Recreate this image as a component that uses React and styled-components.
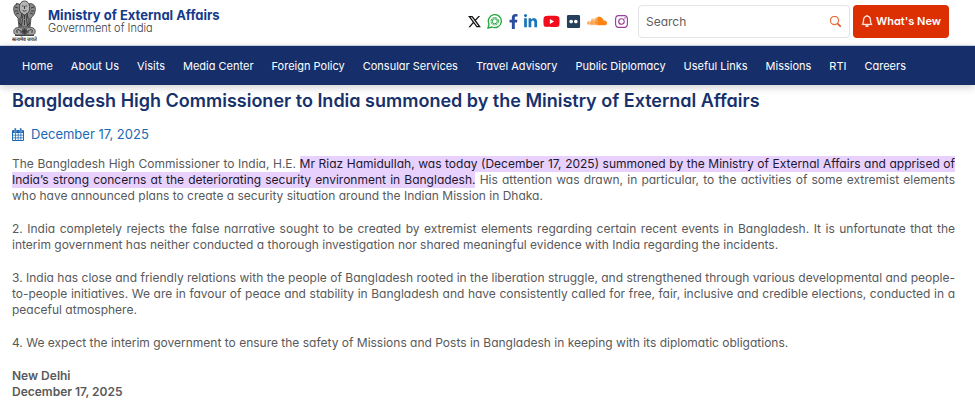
import React from 'react';
import styled, { createGlobalStyle, ThemeProvider } from 'styled-components';
import { FaFacebookF, FaLinkedinIn, FaYoutube, FaFlickr, FaSoundcloud } from 'react-icons/fa';
import { RiTwitterXLine } from 'react-icons/ri';
import { BsBell, BsSearch, BsInstagram } from 'react-icons/bs';

const theme = {
  navy: '#162f6a',
  title: '#17316b',
  brand: '#163a8a',
  blue: '#1c69b4',
  red: '#dc2f02',
  orange: '#e2571e',
  text: '#58595b',
  mark: '#e8d2fd',
  light: 300,
  regular: 400,
  bold: 600,
};

const GlobalStyle = createGlobalStyle`
  *, *::before, *::after {
    box-sizing: border-box;
  }
  body {
    margin: 0;
    background-color: #fff;
    font-family: Inter, 'Open Sans', sans-serif;
    font-feature-settings: 'cv11';
  }
`;

const StyledTopBar = styled.header`
  display: flex;
  align-items: center;
  height: 46px;
  padding: 0 26px 3px 12px;
  border-bottom: 1px solid #cfdcec;
`;

const StyledBrand = styled.a`
  display: flex;
  align-items: center;
  gap: 11px;
  margin-right: auto;
  text-decoration: none;
`;

const StyledBrandName = styled.span`
  display: block;
  font-size: 13px;
  line-height: 14px;
  font-weight: 700;
  color: ${({ theme }) => theme.brand};
`;

const StyledBrandSub = styled.span`
  display: block;
  font-size: 11px;
  line-height: 12px;
  font-weight: ${({ theme }) => theme.light};
  color: #3c3c3e;
`;

const StyledSocial = styled.ul`
  display: flex;
  align-items: center;
  gap: 7px;
  margin: 0 10px 0 0;
  padding: 0;
  list-style: none;
`;

const StyledSocialLink = styled.a`
  display: flex;
  justify-content: center;
  width: ${({ $width }) => $width}px;
  color: ${({ color }) => color};
  svg {
    flex-shrink: 0;
  }
`;

const StyledSearch = styled.form`
  display: flex;
  align-items: center;
  width: 212px;
  height: 33px;
  margin-right: 3px;
  padding: 0 8px 0 7px;
  border: 1px solid #e3e3e8;
  border-radius: 4px;
`;

const StyledInput = styled.input`
  flex: 1;
  min-width: 0;
  padding: 0;
  border: none;
  outline: none;
  background: none;
  font-family: inherit;
  font-feature-settings: inherit;
  font-size: 12px;
  color: ${({ theme }) => theme.text};
  &::placeholder {
    color: #5d5e60;
    opacity: 1;
  }
`;

const StyledSearchButton = styled.button`
  display: flex;
  padding: 0;
  border: none;
  background: none;
  color: ${({ theme }) => theme.orange};
  cursor: pointer;
  svg {
    stroke: currentColor;
    stroke-width: 0.5;
  }
`;

const StyledNewsButton = styled.button`
  display: flex;
  align-items: center;
  justify-content: center;
  gap: 3px;
  width: 96px;
  height: 33px;
  padding: 0;
  border: none;
  border-radius: 4px;
  background-color: ${({ theme }) => theme.red};
  color: #fff;
  font-family: inherit;
  font-feature-settings: inherit;
  font-size: 11px;
  font-weight: ${({ theme }) => theme.bold};
  white-space: nowrap;
  cursor: pointer;
  svg {
    stroke: currentColor;
    stroke-width: 0.5;
  }
`;

const StyledNav = styled.nav`
  display: flex;
  align-items: center;
  gap: 18px;
  height: 39px;
  padding: 0 22px;
  background-color: ${({ theme }) => theme.navy};
  box-shadow: 0 2px 8px rgba(0, 0, 0, 0.2);
`;

const StyledNavLink = styled.a`
  font-size: 11px;
  line-height: 16px;
  font-weight: ${({ theme }) => theme.regular};
  color: #fff;
  text-decoration: none;
  white-space: nowrap;
`;

const StyledArticle = styled.main`
  padding: 4px 20px 2px 12px;
`;

const StyledTitle = styled.h1`
  margin: 0;
  font-size: 18px;
  line-height: 24px;
  font-weight: ${({ theme }) => theme.bold};
  color: ${({ theme }) => theme.title};
`;

const StyledDate = styled.p`
  display: flex;
  align-items: center;
  gap: 7px;
  margin: 12px 0 13px;
  font-size: 13px;
  line-height: 18px;
  color: ${({ theme }) => theme.blue};
`;

const StyledParagraph = styled.p`
  margin: 0 0 17px;
  font-size: 12px;
  line-height: 16px;
  text-align: justify;
  color: ${({ theme }) => theme.text};
`;

const StyledMark = styled.mark`
  padding-bottom: 1px;
  background-color: ${({ theme }) => theme.mark};
  color: #1d1730;
`;

const StyledPlace = styled.p`
  margin: 0;
  font-size: 12px;
  line-height: 16px;
  font-weight: ${({ theme }) => theme.bold};
  color: ${({ theme }) => theme.text};
`;

const Emblem = () => (
  <svg width="25" height="42" viewBox="0 0 25 42" role="img" aria-label="State Emblem of India">
    <g fill="#8a8a8a" stroke="#333" strokeWidth="0.8">
      <path d="M5 4C2 5 1 8 2 11c0 3 2 5 4 7l1 9h11l1-9c2-2 4-4 4-7 1-3 0-6-3-7-2-1-3 0-4 1-1-4-7-4-8 0-1-1-2-2-4-1z" />
      <path d="M8 4c-1 3-1 7 1 9l3.500 2 3.500-2c2-2 2-6 1-9-2-4-7-4-9 0z" fill="#b5b5b5" />
      <path d="M4 28c-3 1-3 6 0 7h17c3-1 3-6 0-7-2-1-5 0-8.500 0S6 27 4 28z" fill="#a5a5a5" />
    </g>
    <g fill="none" stroke="#333" strokeWidth="0.9">
      <path d="M3 7l3 1M3 11l3 0M4 14l3-1M22 7l-3 1M22 11l-3 0M21 14l-3-1M10 6h1.500M13.500 6H15M12.500 6v3M10.500 10.500q2 1.500 4 0M10 13l-1 5M15 13l1 5M12.500 15v4M11 15l-1 4M14 15l1 4" />
      <path d="M8 18v8M10.500 19l-1 7M12.500 20v5M14.500 19l1 7M17 18v8M7 23l3 3M18 23l-3 3" />
      <circle cx="12.500" cy="31.500" r="2.600" />
      <path d="M12.500 29v5M10 31.500h5M10.700 29.700l3.600 3.600M14.300 29.700l-3.600 3.600M4 31l2-1.500L9 31v2.500M5 33v-2M21 31l-2-1.500L16 31v2.500M20 33v-2M3 35.500h19" />
    </g>
    <text x="12.500" y="41" textAnchor="middle" fontSize="5" fontWeight="700" fill="#333">
      सत्यमेव जयते
    </text>
  </svg>
);

const ChannelIcon = () => (
  <svg width="15" height="15" viewBox="0 0 30 30" fill="none" stroke="#25a63c">
    <path d="M2 28l2-8A13 13 0 1 1 10 26z" strokeWidth="2.600" />
    <circle cx="15.500" cy="14.500" r="7.500" strokeWidth="2" strokeDasharray="4.400 1.490" />
    <circle cx="15.500" cy="14.500" r="5" strokeWidth="2" />
  </svg>
);

const CalendarIcon = () => (
  <svg width="12" height="13" viewBox="0 0 24 26" fill="currentColor">
    <path
      fillRule="evenodd"
      d="M2 4h20a2 2 0 0 1 2 2v18a2 2 0 0 1-2 2H2a2 2 0 0 1-2-2V6a2 2 0 0 1 2-2zM2 10v3.500h4V10zM7.500 10v3.500h4V10zM13 10v3.500h4V10zM18.500 10v3.500H22V10zM2 15v4h4v-4zM7.500 15v4h4v-4zM13 15v4h4v-4zM18.500 15v4H22v-4zM2 20.500V24h4v-3.500zM7.500 20.500V24h4v-3.500zM13 20.500V24h4v-3.500zM18.500 20.500V24H22v-3.500z"
    />
    <rect x="4.500" y="0" width="4" height="8" rx="1.500" stroke="#fff" strokeWidth="0.800" />
    <rect x="15.500" y="0" width="4" height="8" rx="1.500" stroke="#fff" strokeWidth="0.800" />
  </svg>
);

const social = [
  { name: 'X', color: '#111', width: 12, icon: <RiTwitterXLine size={15} /> },
  { name: 'WhatsApp', color: '#25a63c', width: 15, icon: <ChannelIcon /> },
  { name: 'Facebook', color: '#2c4ea0', width: 8, icon: <FaFacebookF size={15} /> },
  { name: 'LinkedIn', color: '#1876b8', width: 13, icon: <FaLinkedinIn size={15} /> },
  { name: 'YouTube', color: '#f20d1c', width: 15, icon: <FaYoutube size={17} /> },
  { name: 'Flickr', color: '#25405c', width: 14, icon: <FaFlickr size={15} /> },
  { name: 'SoundCloud', color: '#fb8414', width: 20, icon: <FaSoundcloud size={20} /> },
  { name: 'Instagram', color: '#9b3f9b', width: 14, icon: <BsInstagram size={13} /> },
];

const links = [
  'Home',
  'About Us',
  'Visits',
  'Media Center',
  'Foreign Policy',
  'Consular Services',
  'Travel Advisory',
  'Public Diplomacy',
  'Useful Links',
  'Missions',
  'RTI',
  'Careers',
];

const App = () => (
  <ThemeProvider theme={theme}>
    <GlobalStyle />
    <StyledTopBar>
      <StyledBrand href="#home">
        <Emblem />
        <span>
          <StyledBrandName>Ministry of External Affairs</StyledBrandName>
          <StyledBrandSub>Government of India</StyledBrandSub>
        </span>
      </StyledBrand>
      <StyledSocial>
        {social.map(item => (
          <li key={item.name}>
            <StyledSocialLink href="#social" color={item.color} $width={item.width} aria-label={item.name}>
              {item.icon}
            </StyledSocialLink>
          </li>
        ))}
      </StyledSocial>
      <StyledSearch role="search">
        <StyledInput type="text" placeholder="Search" aria-label="Search" />
        <StyledSearchButton type="submit" aria-label="Search">
          <BsSearch size={11} />
        </StyledSearchButton>
      </StyledSearch>
      <StyledNewsButton type="button">
        <BsBell size={12} />
        What's New
      </StyledNewsButton>
    </StyledTopBar>
    <StyledNav>
      {links.map(item => (
        <StyledNavLink key={item} href="#nav">
          {item}
        </StyledNavLink>
      ))}
    </StyledNav>
    <StyledArticle>
      <StyledTitle>Bangladesh High Commissioner to India summoned by the Ministry of External Affairs</StyledTitle>
      <StyledDate>
        <CalendarIcon />
        December 17, 2025
      </StyledDate>
      <StyledParagraph>
        The Bangladesh High Commissioner to India, H.E.{' '}
        <StyledMark>
          Mr Riaz Hamidullah, was today (December 17, 2025) summoned by the Ministry of External Affairs and apprised
          of India’s strong concerns at the deteriorating security environment in Bangladesh.
        </StyledMark>{' '}
        His attention was drawn, in particular, to the activities of some extremist elements who have announced plans
        to create a security situation around the Indian Mission in Dhaka.
      </StyledParagraph>
      <StyledParagraph>
        2. India completely rejects the false narrative sought to be created by extremist elements regarding certain
        recent events in Bangladesh. It is unfortunate that the interim government has neither conducted a thorough
        investigation nor shared meaningful evidence with India regarding the incidents.
      </StyledParagraph>
      <StyledParagraph>
        3. India has close and friendly relations with the people of Bangladesh rooted in the liberation struggle, and
        strengthened through various developmental and people-to-people initiatives. We are in favour of peace and
        stability in Bangladesh and have consistently called for free, fair, inclusive and credible elections,
        conducted in a peaceful atmosphere.
      </StyledParagraph>
      <StyledParagraph>
        4. We expect the interim government to ensure the safety of Missions and Posts in Bangladesh in keeping with
        its diplomatic obligations.
      </StyledParagraph>
      <StyledPlace>
        New Delhi
        <br />
        December 17, 2025
      </StyledPlace>
    </StyledArticle>
  </ThemeProvider>
);

export default App;
